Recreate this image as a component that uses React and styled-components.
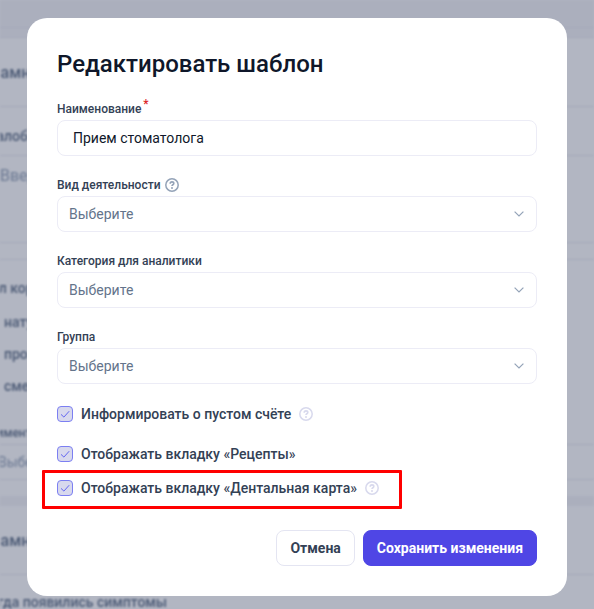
import React from 'react'

import styled, {createGlobalStyle} from 'styled-components'

const GlobalStyle = createGlobalStyle`
  *, *::before, *::after {
    box-sizing: border-box;
  }
  body {
    margin: 0;
    font-family: Roboto, 'Liberation Sans', sans-serif;
    font-size: 14px;
    color: #334155;
    background: #fff;
  }
  input, select, button {
    font: inherit;
  }
`

const Page = styled.div`
  height: 100vh;
  overflow: hidden;
  filter: blur(1px);
`
const Strip = styled.div`
  height: ${p => p.$height}px;
  background: ${p => (p.$plain ? '#fff' : '#f5f5f8')};
  border-bottom: ${p => (p.$line ? '1px solid #e9eaf2' : 'none')};
`
const Row = styled.div`
  display: flex;
  align-items: center;
  height: ${p => p.$height}px;
  padding-top: ${p => p.$padTop || 0}px;
  padding-bottom: ${p => p.$padBottom || 0}px;
  border-bottom: ${p => (p.$line ? '1px solid #e9eaf2' : 'none')};
  font-size: ${p => p.$size || 14}px;
  font-weight: ${p => p.$weight || 500};
  color: ${p => (p.$weight ? '#94a3b8' : '#64748b')};
  text-indent: ${p => p.$shift || 0}px;
  white-space: nowrap;
`
const Overlay = styled.div`
  position: fixed;
  inset: 0;
  display: flex;
  align-items: flex-start;
  justify-content: center;
  padding: 18px 27px;
  background: rgba(29, 41, 76, 0.34);
  overflow: auto;
`
const Modal = styled.form`
  width: 100%;
  max-width: 540px;
  padding: 30px;
  border-radius: 20px;
  background: #fff;
`
const Title = styled.h1`
  margin: 0 0 20px;
  font-size: 24px;
  font-weight: 500;
  line-height: 32px;
  color: #0f172a;
`
const Fields = styled.div`
  display: flex;
  flex-direction: column;
  gap: 20px;
`
const Field = styled.div`
  display: flex;
  flex-direction: column;
  gap: 2px;
`
const LabelRow = styled.div`
  display: flex;
  align-items: center;
  gap: 4px;
  height: 18px;
`
const Label = styled.label`
  font-size: 12px;
  font-weight: 500;
  line-height: 18px;
`
const Star = styled.sup`
  margin-left: 2px;
  font-size: 12px;
  line-height: 0;
  color: #dc2626;
`
const Input = styled.input`
  width: 100%;
  height: 36px;
  padding: 0 15px;
  border: 1px solid #ececf6;
  border-radius: 8px;
  color: #0f172a;
  background: #fff;
`
const SelectBox = styled.div`
  display: grid;
  align-items: center;

  > * {
    grid-area: 1 / 1;
  }
  svg {
    justify-self: end;
    margin-right: 13px;
    pointer-events: none;
  }
`
const Select = styled.select`
  width: 100%;
  height: 36px;
  padding: 0 11px;
  border: 1px solid #ececf6;
  border-radius: 8px;
  appearance: none;
  color: #64748b;
  background: #fff;
`
const HelpButton = styled.button`
  display: flex;
  padding: 0;
  border: 0;
  background: none;
  color: ${p => (p.$muted ? '#d8d9ed' : '#94a3b8')};
`
const Options = styled.div`
  display: flex;
  flex-direction: column;
  gap: 16px;
  margin-top: 18px;
`
const OptionRow = styled.div`
  display: flex;
  align-items: center;
  gap: 8px;
  height: 24px;
`
const CheckBox = styled.span`
  display: grid;

  > * {
    grid-area: 1 / 1;
  }
  svg {
    pointer-events: none;
  }
`
const Check = styled.input`
  width: 16px;
  height: 16px;
  margin: 0;
  border: 1px solid #7c7ff2;
  border-radius: 4px;
  appearance: none;
  background: #d8d9ed;
`
const OptionLabel = styled.label`
  font-weight: 500;
  line-height: 24px;
`
const Highlight = styled.div`
  width: fit-content;
  margin: 4px 0 0 -15px;
  padding: 3px 20px 6px 12px;
  border: 3px solid #f00;
  border-radius: 1px;
`
const Actions = styled.div`
  display: flex;
  justify-content: flex-end;
  gap: 8px;
  margin-top: 21px;
`
const Button = styled.button`
  height: 36px;
  padding: 0 13px;
  border: 1px solid ${p => (p.$primary ? '#4f46e5' : '#e4e5f2')};
  border-radius: 8px;
  font-weight: 700;
  color: ${p => (p.$primary ? '#fff' : '#334155')};
  background: ${p => (p.$primary ? '#4f46e5' : '#fff')};
`

const Help = ({label, muted}) => (
  <HelpButton type="button" aria-label={label} $muted={muted}>
    <svg width="14" height="14" viewBox="0 0 14 14" fill="none">
      <circle cx="7" cy="7" r="6.2" stroke="currentColor" strokeWidth="1.5" />
      <path
        d="M5.2 5.7C5.2 4.5 6 3.9 7 3.9s1.8.6 1.8 1.6c0 1.2-1.8 1.3-1.8 2.5"
        stroke="currentColor"
        strokeWidth="1.6"
      />
      <circle cx="7" cy="9.9" r="1" fill="currentColor" />
    </svg>
  </HelpButton>
)

const SelectField = ({id, caption, help}) => (
  <Field>
    <LabelRow>
      <Label htmlFor={id}>{caption}</Label>
      {help && <Help label={caption} />}
    </LabelRow>
    <SelectBox>
      <Select id={id} defaultValue="">
        <option value="">Выберите</option>
      </Select>
      <svg width="10" height="6" viewBox="0 0 10 6" fill="none">
        <path d="M.6.6 5 5 9.4.6" stroke="#94a3b8" strokeWidth="1.2" />
      </svg>
    </SelectBox>
  </Field>
)

const Option = ({id, help, children}) => (
  <OptionRow>
    <CheckBox>
      <Check id={id} type="checkbox" defaultChecked />
      <svg width="16" height="16" viewBox="0 0 16 16" fill="none">
        <path d="M4 8.4 6.9 11.1 12.2 5.2" stroke="#6366f1" />
      </svg>
    </CheckBox>
    <OptionLabel htmlFor={id}>{children}</OptionLabel>
    {help && <Help label="Подсказка" muted />}
  </OptionRow>
)

// the form under the dialog, scrolled a little to the right
const Backdrop = () => (
  <Page aria-hidden="true">
    <Strip $height={28} $line />
    <Strip $height={10} $line />
    <Row $height={69} $size={16} $shift={-19} $line>
      Анамнез
    </Row>
    <Row $height={49} $padTop={9} $shift={-17} $line>
      Жалобы
    </Row>
    <Row $height={87} $padBottom={48} $size={16} $weight={400} $line>
      Введите
    </Row>
    <Strip $height={17} $plain $line />
    <Row $height={46} $padTop={10} $shift={-19}>
      Пол корма
    </Row>
    <Row $height={32} $shift={4}>
      натуральный
    </Row>
    <Row $height={32} $shift={4}>
      промышленный
    </Row>
    <Row $height={32} $shift={4}>
      смешанный
    </Row>
    <Row $height={43} $padTop={20} $size={12} $shift={-20} $line>
      Комментарий
    </Row>
    <Row $height={35} $weight={400} $shift={-2} $line>
      Выберите
    </Row>
    <Strip $height={16} $plain />
    <Strip $height={10} />
    <Row $height={69} $size={16} $shift={-19} $line>
      Анамнез
    </Row>
    <Row $height={54} $shift={-19}>
      Когда появились симптомы
    </Row>
  </Page>
)

const App = () => (
  <>
    <GlobalStyle />
    <Backdrop />
    <Overlay>
      <Modal role="dialog" aria-labelledby="title">
        <Title id="title">Редактировать шаблон</Title>
        <Fields>
          <Field>
            <LabelRow>
              <Label htmlFor="name">
                Наименование<Star>*</Star>
              </Label>
            </LabelRow>
            <Input id="name" type="text" defaultValue="Прием стоматолога" />
          </Field>
          <SelectField id="activity" caption="Вид деятельности" help />
          <SelectField id="category" caption="Категория для аналитики" />
          <SelectField id="group" caption="Группа" />
        </Fields>
        <Options>
          <Option id="inform" help>
            Информировать о пустом счёте
          </Option>
          <Option id="recipes">Отображать вкладку «Рецепты»</Option>
        </Options>
        <Highlight>
          <Option id="dental" help>
            Отображать вкладку «Дентальная карта»
          </Option>
        </Highlight>
        <Actions>
          <Button type="button">Отмена</Button>
          <Button type="submit" $primary>
            Сохранить изменения
          </Button>
        </Actions>
      </Modal>
    </Overlay>
  </>
)

export default App
